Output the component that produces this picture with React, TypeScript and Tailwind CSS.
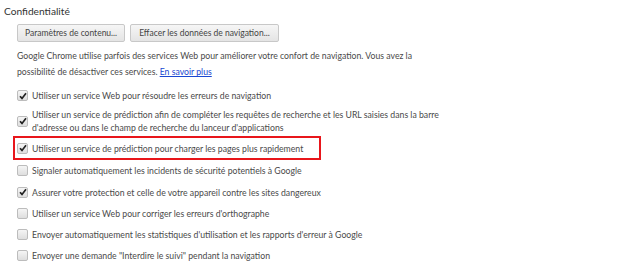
import React from "react";

type Item = { label: React.ReactNode; checked: boolean; highlight?: boolean; h: string };

const items: Item[] = [
  { label: "Utiliser un service Web pour résoudre les erreurs de navigation", checked: true, h: "h-[21px]" },
  {
    label: (
      <>
        Utiliser un service de prédiction afin de compléter les requêtes de recherche et les URL saisies dans la barre
        <br />
        d'adresse ou dans le champ de recherche du lanceur d'applications
      </>
    ),
    checked: true,
    h: "h-[30px]",
  },
  {
    label: "Utiliser un service de prédiction pour charger les pages plus rapidement",
    checked: true,
    highlight: true,
    h: "h-[24px]",
  },
  { label: "Signaler automatiquement les incidents de sécurité potentiels à Google", checked: false, h: "h-[21px]" },
  {
    label: "Assurer votre protection et celle de votre appareil contre les sites dangereux",
    checked: true,
    h: "h-[22px]",
  },
  { label: "Utiliser un service Web pour corriger les erreurs d'orthographe", checked: false, h: "h-[21px]" },
  {
    label: "Envoyer automatiquement les statistiques d'utilisation et les rapports d'erreur à Google",
    checked: false,
    h: "h-[21px]",
  },
  { label: 'Envoyer une demande "Interdire le suivi" pendant la navigation', checked: false, h: "h-[21px]" },
];

function Checkbox({ checked }: { checked: boolean }) {
  return (
    <span className="flex h-[11px] w-[11px] shrink-0 items-center justify-center rounded-[2px] border border-[#bcbcbc] bg-gradient-to-b from-[#f5f5f5] to-[#dedede]">
      {checked && (
        <svg width="8" height="8" viewBox="0 0 8 8">
          <path d="M1 4.2 L3 6.4 L7 1.2" fill="none" stroke="#222" strokeWidth="1.7" />
        </svg>
      )}
    </span>
  );
}

export default function App() {
  return (
    <div className="h-[277px] w-[640px] overflow-hidden bg-white font-['Lato',sans-serif] text-[8.7px] text-[#4a4a4a]">
      <div className="h-[21px] pl-[4px] pt-[5px] text-[10.2px] leading-[13px] text-[#333]">Confidentialité</div>

      <div className="pl-[17px]">
        {/* Buttons */}
        <div className="mt-[3px] flex gap-[5px]">
          <button className="h-[18px] rounded-[2px] border border-[#c8c8c8] bg-gradient-to-b from-[#f6f6f6] to-[#e4e4e4] px-[7px] text-[8.5px] leading-none text-[#444]">
            Paramètres de contenu...
          </button>
          <button className="h-[18px] rounded-[2px] border border-[#c8c8c8] bg-gradient-to-b from-[#f6f6f6] to-[#e4e4e4] px-[8px] text-[8.5px] leading-none text-[#444]">
            Effacer les données de navigation...
          </button>
        </div>

        {/* Intro */}
        <p className="mt-[6px] leading-[16px]">
          Google Chrome utilise parfois des services Web pour améliorer votre confort de navigation. Vous avez la
          <br />
          possibilité de désactiver ces services.{" "}
          <a className="text-[#1a47d1] underline">En savoir plus</a>
        </p>

        {/* Options */}
        <div className="mt-[5px] flex flex-col">
          {items.map((item, i) => (
            <div
              key={i}
              className={
                item.highlight
                  ? `-ml-[4px] flex w-[308px] items-center gap-[4px] border-2 border-[#e8161b] pl-[2px] ${item.h}`
                  : `flex items-center gap-[4px] ${item.h}`
              }
            >
              <Checkbox checked={item.checked} />
              <span className="leading-[13px]">{item.label}</span>
            </div>
          ))}
        </div>
      </div>
    </div>
  );
}
